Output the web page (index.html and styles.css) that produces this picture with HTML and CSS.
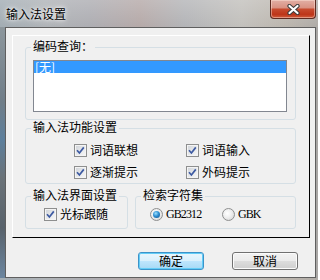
FILE: index.html
```html
<!DOCTYPE html>
<html>
<head>
<meta charset="utf-8">
<link rel="stylesheet" href="styles.css">
</head>
<body>
<div class="window">
  <div class="titlebar">
    <span class="title">输入法设置</span>
    <div class="close">
      <svg width="13" height="11" viewBox="0 0 13 11">
        <path d="M2.5 2 L10.5 9 M10.5 2 L2.5 9" stroke="#3b3b3b" stroke-width="4.2" stroke-linecap="round" fill="none"/>
        <path d="M2.5 2 L10.5 9 M10.5 2 L2.5 9" stroke="#ffffff" stroke-width="2.2" stroke-linecap="round" fill="none"/>
      </svg>
    </div>
  </div>
  <div class="frame">
    <div class="edge-left"></div>
    <div class="client">
      <div class="panel">
        <fieldset class="group g1">
          <legend>编码查询：</legend>
          <div class="listbox"><div class="item">[无]</div></div>
        </fieldset>
        <fieldset class="group g2">
          <legend>输入法功能设置</legend>
          <div class="opts">
            <label class="opt"><span class="cb"><svg width="11" height="11" viewBox="0 0 11 11"><path d="M2 5.3 L4.4 8 L8.8 2.4" stroke="#3d5aa2" stroke-width="1.7" fill="none"/></svg></span><span>词语联想</span></label>
            <label class="opt"><span class="cb"><svg width="11" height="11" viewBox="0 0 11 11"><path d="M2 5.3 L4.4 8 L8.8 2.4" stroke="#3d5aa2" stroke-width="1.7" fill="none"/></svg></span><span>词语输入</span></label>
            <label class="opt"><span class="cb"><svg width="11" height="11" viewBox="0 0 11 11"><path d="M2 5.3 L4.4 8 L8.8 2.4" stroke="#3d5aa2" stroke-width="1.7" fill="none"/></svg></span><span>逐渐提示</span></label>
            <label class="opt"><span class="cb"><svg width="11" height="11" viewBox="0 0 11 11"><path d="M2 5.3 L4.4 8 L8.8 2.4" stroke="#3d5aa2" stroke-width="1.7" fill="none"/></svg></span><span>外码提示</span></label>
          </div>
        </fieldset>
        <div class="row">
          <fieldset class="group g3">
            <legend>输入法界面设置</legend>
            <label class="opt"><span class="cb"><svg width="11" height="11" viewBox="0 0 11 11"><path d="M2 5.3 L4.4 8 L8.8 2.4" stroke="#3d5aa2" stroke-width="1.7" fill="none"/></svg></span><span>光标跟随</span></label>
          </fieldset>
          <fieldset class="group g4">
            <legend>检索字符集</legend>
            <div class="radios">
              <label class="opt"><span class="rb"><span class="dot"></span></span><span class="latin">GB2312</span></label>
              <label class="opt"><span class="rb"></span><span class="latin">GBK</span></label>
            </div>
          </fieldset>
        </div>
      </div>
      <div class="buttons">
        <div class="btn default">确定</div>
        <div class="btn">取消</div>
      </div>
    </div>
    <div class="edge-right"></div>
  </div>
</div>
</body>
</html>
```
FILE: styles.css
```css
body {
  margin: 0;
  font-family: "Noto Sans CJK SC", "Noto Sans", sans-serif;
  font-size: 12px;
  color: #000;
}

.window {
  width: 318px;
  height: 280px;
  overflow: hidden;
  background:
    linear-gradient(180deg, rgba(255,255,255,0.18), rgba(255,255,255,0) 26px),
    linear-gradient(90deg, #a3adb4 0%, #b0b4b8 14%, #aeaeb3 28%, #b6aaa9 44%, #b4b5b8 58%, #c3c1bd 76%, #bcb6ae 90%, #b0aca8 100%);
}

.titlebar {
  height: 27px;
  display: flex;
  justify-content: space-between;
  align-items: flex-start;
}

.title {
  padding: 7px 0 0 6px;
  line-height: 14px;
  font-size: 12px;
  text-shadow: 0 0 6px #fff, 0 0 3px rgba(255,255,255,0.9);
}

.close {
  width: 46px;
  height: 19px;
  margin-right: 2px;
  box-sizing: border-box;
  border: 1px solid #5d2b22;
  border-top: none;
  border-radius: 0 0 4px 4px;
  background: linear-gradient(180deg, #e2afa5 0%, #d99283 42%, #c64a2e 52%, #bd3519 80%, #cf5d3e 100%);
  box-shadow: inset 0 0 0 1px rgba(255,230,220,0.45);
  display: flex;
  align-items: center;
  justify-content: center;
}

.frame {
  height: 251px;
  display: flex;
}

.edge-left {
  width: 5px;
  background: linear-gradient(180deg, #8d979d 0%, #6f7d88 30%, #5d7f9c 45%, #6a7278 60%, #58626b 80%, #6c86a0 100%);
}

.edge-right {
  width: 2px;
  background: #a9a7a5;
}

.client {
  width: 311px;
  box-sizing: border-box;
  border: 1px solid #5f5f5f;
  background: #f0f0f0;
}

.panel {
  margin: 7px 0 0 6px;
  width: 298px;
  height: 203px;
  box-sizing: border-box;
  border-top: 1px solid #ffffff;
  border-left: 1px solid #ffffff;
  border-right: 1px solid #000000;
  border-bottom: 1px solid #000000;
}

.group {
  margin: 0 0 0 12px;
  min-width: 0;
  box-sizing: border-box;
  border: 1px solid #d5dfe5;
  border-radius: 3px;
}

.group legend {
  padding: 0 2px 3px;
  line-height: 14px;
  font-size: 12px;
}

.g1 {
  margin-top: 3px;
  width: 271px;
  padding: 4px 5px 7px;
}

.listbox {
  margin-left: 2px;
  width: 254px;
  height: 52px;
  box-sizing: border-box;
  border: 1px solid #828790;
  background: #fff;
}

.item {
  height: 12px;
  line-height: 12px;
  padding-left: 1px;
  background: #3399ff;
  color: #fff;
}

.g2 {
  width: 271px;
  padding: 3px 5px 1px;
}

.opts {
  margin-left: 43px;
  display: grid;
  grid-template-columns: 112px auto;
  row-gap: 2px;
}

.opt {
  display: flex;
  align-items: center;
  gap: 3px;
  height: 20px;
  line-height: 14px;
}

.cb {
  width: 13px;
  height: 13px;
  box-sizing: border-box;
  border: 1px solid #8e8f8f;
  background: linear-gradient(135deg, #cdd1d7 0%, #e6e8ea 50%, #f8f8f8 100%);
  box-shadow: inset 0 0 0 1px #f4f4f4;
  display: flex;
  align-items: center;
  justify-content: center;
  flex: none;
}

.row {
  margin: 4px 0 0 12px;
  display: flex;
  gap: 7px;
}

.row .group {
  margin-left: 0;
  padding: 0 5px 5px;
}

.row .opt {
  height: 18px;
}

.g3 {
  width: 103px;
}

.g3 .opt {
  margin-left: 13px;
}

.g4 {
  width: 161px;
}

.radios {
  margin-left: 9px;
  display: grid;
  grid-template-columns: 72px auto;
}

.rb {
  width: 13px;
  height: 13px;
  box-sizing: border-box;
  border: 1px solid #8e8f8f;
  border-radius: 50%;
  background: radial-gradient(circle at 40% 40%, #ffffff 0%, #eeeeee 45%, #cfcfcf 100%);
  display: flex;
  align-items: center;
  justify-content: center;
  flex: none;
}

.dot {
  width: 7px;
  height: 7px;
  border-radius: 50%;
  background: radial-gradient(circle at 40% 35%, #9be0ff 0%, #2f8fd2 45%, #0d4d87 100%);
}

.latin {
  font-family: "Liberation Serif", serif;
  font-size: 12px;
  letter-spacing: -0.9px;
}

.buttons {
  margin-top: 14px;
  padding-right: 17px;
  display: flex;
  justify-content: flex-end;
  gap: 28px;
}

.btn {
  width: 66px;
  height: 18px;
  box-sizing: border-box;
  border: 1px solid #707070;
  border-radius: 3px;
  background: linear-gradient(180deg, #f2f2f2 0%, #ebebeb 50%, #dddddd 51%, #cfcfcf 100%);
  box-shadow: inset 0 0 0 1px #fbfbfb;
  display: flex;
  align-items: center;
  justify-content: center;
  line-height: 14px;
}

.btn.default {
  border-color: #3c93c9;
  background: linear-gradient(180deg, #eaf6fd 0%, #d9f0fc 50%, #bee6fd 51%, #a7d9f5 100%);
  box-shadow: inset 0 0 0 1px #63cdf7;
}
```
